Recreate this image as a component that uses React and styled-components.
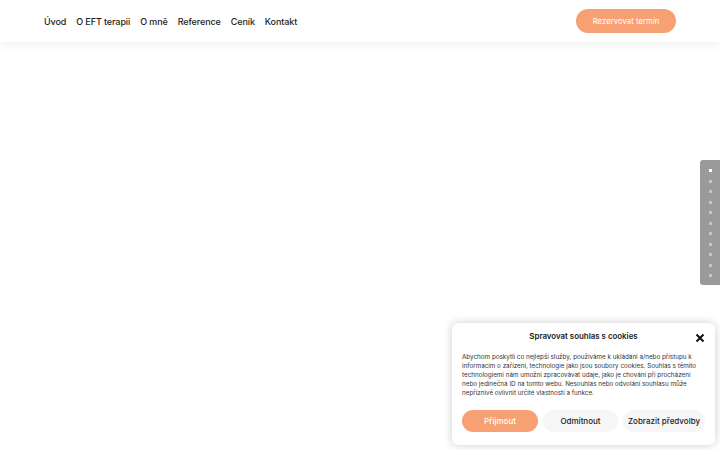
import React from 'react';
import styled, { createGlobalStyle } from 'styled-components';

const GlobalStyle = createGlobalStyle`
    html, body {
        margin: 0;
        padding: 0;
        background: #ffffff;
        font-family: Inter, "Noto Sans", sans-serif;
    }
`;

const Page = styled.div`
    width: 720px;
    height: 450px;
    position: relative;
    overflow: hidden;
    background: #ffffff;
`;

const Header = styled.header`
    height: 42px;
    display: flex;
    align-items: center;
    justify-content: space-between;
    padding: 0 44px;
    background: #ffffff;
    box-shadow: 0 2px 10px rgba(0, 0, 0, 0.07);
    box-sizing: border-box;
`;

const Nav = styled.nav`
    display: flex;
    gap: 10px;
`;

const NavLink = styled.a`
    font-size: 9px;
    font-weight: 450;
    color: #222;
    text-decoration: none;
    letter-spacing: -0.1px;
`;

const PillButton = styled.button`
    border: none;
    border-radius: 999px;
    font-family: inherit;
    cursor: pointer;
    background: ${({ variant }) => (variant === 'primary' ? '#f7a074' : '#f6f6f6')};
    color: ${({ variant }) => (variant === 'primary' ? '#ffffff' : '#222')};
    font-size: ${({ small }) => (small ? '7.8px' : '8px')};
    font-weight: ${({ small }) => (small ? 400 : 500)};
    height: ${({ small }) => (small ? '24px' : '22px')};
    width: ${({ w }) => w}px;
    padding: 0;
`;

const DotRail = styled.div`
    position: absolute;
    right: 0;
    top: 160px;
    width: 20px;
    height: 125px;
    background: #9a9a9a;
    border-radius: 3px 0 0 3px;
    display: flex;
    flex-direction: column;
    align-items: center;
    padding-top: 9px;
    gap: 7.5px;
    box-sizing: border-box;
`;

const Dot = styled.span`
    width: 3px;
    height: 3px;
    background: ${({ active }) => (active ? '#ffffff' : '#c4c4c4')};
`;

const Banner = styled.div`
    position: absolute;
    left: 452px;
    top: 323px;
    width: 263px;
    height: 122px;
    background: #ffffff;
    border-radius: 6px;
    box-shadow: 0 0 10px rgba(0, 0, 0, 0.2);
    padding: 0 10px;
    box-sizing: border-box;
    display: flex;
    flex-direction: column;
`;

const BannerHead = styled.div`
    height: 26px;
    display: flex;
    align-items: center;
    justify-content: center;
    position: relative;
`;

const BannerTitle = styled.div`
    font-size: 7.9px;
    font-weight: 600;
    color: #1a1a1a;
`;

const Close = styled.button`
    position: absolute;
    right: 0;
    top: 8px;
    border: none;
    background: none;
    padding: 0;
    width: 10px;
    height: 10px;
    cursor: pointer;
`;

const BannerText = styled.p`
    margin: 4px 0 0;
    font-size: 6.3px;
    line-height: 9.1px;
    color: #333;
`;

const BannerActions = styled.div`
    margin-top: 12px;
    display: flex;
    gap: 5px;
`;

const links = ['Úvod', 'O EFT terapii', 'O mně', 'Reference', 'Ceník', 'Kontakt'];

export default function App() {
    return (
        <Page>
            <GlobalStyle />
            <Header>
                <Nav>
                    {links.map((l) => (
                        <NavLink key={l} href="#">{l}</NavLink>
                    ))}
                </Nav>
                <PillButton variant="primary" small w={100}>Rezervovat termín</PillButton>
            </Header>

            <DotRail>
                {Array.from({ length: 11 }).map((_, i) => (
                    <Dot key={i} active={i === 0} />
                ))}
            </DotRail>

            <Banner>
                <BannerHead>
                    <BannerTitle>Spravovat souhlas s cookies</BannerTitle>
                    <Close aria-label="close">
                        <svg width="10" height="10" viewBox="0 0 10 10">
                            <path d="M1.5 1.5 L8.5 8.5 M8.5 1.5 L1.5 8.5" stroke="#111" strokeWidth="2" />
                        </svg>
                    </Close>
                </BannerHead>
                <BannerText>
                    Abychom poskytli co nejlepší služby, používáme k ukládání a/nebo přístupu k informacím o zařízení, technologie jako jsou soubory cookies. Souhlas s těmito technologiemi nám umožní zpracovávat údaje, jako je chování při procházení nebo jedinečná ID na tomto webu. Nesouhlas nebo odvolání souhlasu může nepříznivě ovlivnit určité vlastnosti a funkce.
                </BannerText>
                <BannerActions>
                    <PillButton variant="primary" w={76}>Přijmout</PillButton>
                    <PillButton w={75}>Odmítnout</PillButton>
                    <PillButton w={82}>Zobrazit předvolby</PillButton>
                </BannerActions>
            </Banner>
        </Page>
    );
}
